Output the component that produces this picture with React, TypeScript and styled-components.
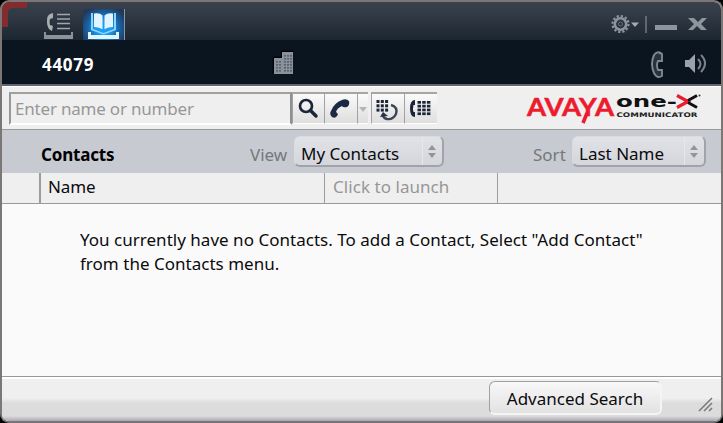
import React from 'react';
import styled, { createGlobalStyle } from 'styled-components';

const Global = createGlobalStyle`
  * { box-sizing: border-box; }
  body { margin: 0; background: #000; font-family: "Noto Sans", "Liberation Sans", sans-serif; }
  button, input { font-family: inherit; margin: 0; padding: 0; }
`;

const Window = styled.div`
  position: relative;
  display: flex;
  flex-direction: column;
  width: 723px;
  height: 423px;
  border: 2px solid #7b7777;
  border-bottom-color: #777379;
  border-radius: 9px;
  overflow: hidden;
  background: #fafafa;
  font-size: 17px;
  color: #0b0b0d;
`;

const Corner = styled.svg`
  position: absolute;
  left: 0;
  top: 0;
`;

const TitleBar = styled.header`
  display: flex;
  flex: none;
  height: 38px;
  padding-left: 40px;
  padding-right: 13px;
  background: linear-gradient(#3a414d, #303944 35%, #1c2732);
`;

const Tab = styled.button<{ $active?: boolean }>`
  display: block;
  width: ${p => (p.$active ? 42 : 41)}px;
  height: 31px;
  margin-top: 7px;
  border: 0;
  border-right: ${p => (p.$active ? '1px solid #8896a6' : '0')};
  border-radius: ${p => (p.$active ? '4px 0 0 0' : '0')};
  background: ${p => (p.$active ? 'radial-gradient(ellipse at 50% 60%, #1c9cf2 28%, #1763a6 55%, #22385a 85%)' : 'none')};
`;

const WindowControls = styled.div`
  display: flex;
  margin-left: auto;
`;

const StatusBar = styled.div`
  display: flex;
  flex: none;
  height: 46px;
  padding: 0 12px 0 40px;
  background: #0b1520;
  border-bottom: 2px solid #626575;
`;

const Extension = styled.strong`
  width: 228px;
  line-height: 49px;
  letter-spacing: 0.7px;
  color: #fff;
`;

const StatusIcons = styled.div`
  display: flex;
  margin-left: auto;
`;

const Toolbar = styled.div`
  display: flex;
  flex: none;
  height: 44px;
  padding: 5px 0 0 7px;
  background: #efefef;
  border-top: 1px solid #fff;
  border-bottom: 1px solid #9a9a9a;
`;

const SearchInput = styled.input`
  width: 283px;
  height: 33px;
  padding-left: 4px;
  border: 2px solid #989898;
  border-top-color: #a0a0a0;
  border-right-color: #8f8f8f;
  border-bottom-color: #fff;
  background: #efefef;
  font-size: 17px;
  letter-spacing: -0.2px;
  outline: none;
  &::placeholder { color: #979797; opacity: 1; }
`;

const ToolButton = styled.button<{ $w: number; $gap?: number }>`
  width: ${p => p.$w}px;
  height: 32px;
  margin-left: ${p => p.$gap || 0}px;
  border: 0;
  border-top: 2px solid #a5a5a5;
  border-left: 1px solid #a2a2a2;
  border-bottom: 1px solid #fff;
  background: linear-gradient(#fafafa, #dedede);
  svg { display: block; }
`;

const Brand = styled.svg`
  margin-left: auto;
  margin-right: 19px;
  margin-top: -3px;
`;

const FilterBar = styled.div`
  display: flex;
  flex: none;
  align-items: flex-start;
  height: 43px;
  padding: 6px 15px 0 39px;
  background: #c8cad2;
`;

const Heading = styled.h1`
  width: 209px;
  margin: 0;
  font-size: 17px;
  line-height: 37px;
  letter-spacing: -0.2px;
  color: #000;
`;

const Label = styled.label<{ $w: number; $end?: boolean }>`
  width: ${p => p.$w}px;
  margin-left: ${p => (p.$end ? 'auto' : '0')};
  line-height: 37px;
  color: #76777b;
`;

const Select = styled.button<{ $w: number }>`
  display: flex;
  width: ${p => p.$w}px;
  height: 31px;
  padding-left: 6px;
  border: 1px solid #d9dbe0;
  border-right: 2px solid #a2a3a8;
  border-bottom: 2px solid #a2a3a8;
  border-radius: 6px;
  background: linear-gradient(#e1e2e6, #d5d6dc);
  text-align: left;
  font-size: 17px;
  line-height: 33px;
  letter-spacing: 0;
  color: #0b0b0d;
  white-space: nowrap;
`;

const Chevrons = styled.svg`
  flex: none;
  margin-left: auto;
  border-left: 1px solid #e6e7eb;
`;

const ColumnHeader = styled.div`
  display: flex;
  flex: none;
  height: 31px;
  background: #efefef;
  border-bottom: 1px solid #999;
`;

const Column = styled.div<{ $w: number; $muted?: boolean; $thick?: boolean }>`
  width: ${p => p.$w}px;
  padding-left: ${p => (p.$muted ? 8 : 7)}px;
  border-right: ${p => (p.$thick ? 2 : 1)}px solid #9c9c9c;
  line-height: 27px;
  letter-spacing: ${p => (p.$muted ? 0.05 : -0.1)}px;
  color: ${p => (p.$muted ? '#979797' : '#0b0b0d')};
`;

const Content = styled.main`
  flex: 1;
  padding: 24px 0 0 78px;
  line-height: 24px;
  letter-spacing: 0.02px;
  white-space: nowrap;
`;

const Footer = styled.footer`
  display: flex;
  flex: none;
  height: 45px;
  padding-left: 487px;
  padding-top: 4px;
  border-top: 1px solid #999;
  background: linear-gradient(#fff 0 2px, #efefef 2px 21px, #dcdcdc 26px 39px, #a9a9af);
`;

const SearchButton = styled.button`
  width: 173px;
  height: 34px;
  padding-top: 2px;
  border: 2px solid #f4f4f4;
  border-top: 1px solid #a1a1a1;
  border-left: 1px solid #a1a1a1;
  border-radius: 6px;
  background: linear-gradient(#f8f8f8, #e2e2e2);
  font-size: 17px;
  line-height: 28px;
  color: #0b0b0d;
`;

const Grip = styled.svg`
  margin: 15px 0 0 36px;
`;

type DotsProps = { x: number; y: number; rows?: number; cols?: number; w?: number; h?: number; dx?: number; dy?: number };

function Dots({ x, y, rows = 3, cols = 3, w = 3, h = 3, dx = 4.3, dy = 4.3 }: DotsProps) {
  return (
    <>
      {Array.from({ length: rows * cols }, (_, i) => (
        <rect key={i} x={x + (i % cols) * dx} y={y + Math.floor(i / cols) * dy} width={w} height={h} />
      ))}
    </>
  );
}

function Picker({ width, value }: { width: number; value: string }) {
  return (
    <Select $w={width}>
      {value}
      <Chevrons width="20" height="28">
        <path d="M5 13l4-5 4 5zM5 16h8l-4 5z" fill="#949599" />
      </Chevrons>
    </Select>
  );
}

export default function App() {
  return (
    <>
      <Global />
      <Window>
        <TitleBar>
          <Tab aria-label="Call log">
            <svg width="41" height="31" viewBox="42 9 41 31">
              <path d="M53 13q-7 1-6 9 0 7 5 9l1-5-3-1q-1-3 0-6l3-1z" fill="#a9aeb3" />
              <path d="M57 14.500h13M57 19h13M57 23.500h13M57 28.500h13" stroke="#a1a6ac" strokeWidth="1.500" />
              <path d="M44 32h2v3h25v-3h2v7H44z" fill="#8b9299" />
            </svg>
          </Tab>
          <Tab $active aria-label="Contacts">
            <svg width="41" height="31" viewBox="83 9 41 31">
              <path d="M91 13h2v16l10.500 4 10.500-4V13h2v17l-12.500 4.500L91 30z" fill="#8fd6ff" />
              <path d="M94 13.500q6-1 8.500 2v14q-3-2.500-8.500-2.500zM104.500 15.500q3-3 8.500-2v13.500q-6 0-8.500 2.500z" fill="#e2f5ff" />
              <path d="M88 32h3v3h25v-3h3v7H88z" fill="#e2f5ff" />
            </svg>
          </Tab>
          <WindowControls>
            <svg width="98" height="38" viewBox="610 2 98 38">
              <circle cx="620.500" cy="24" r="8" fill="none" stroke="#8d949d" strokeWidth="2.200" strokeDasharray="2.300 1.890" />
              <circle cx="620.500" cy="24" r="5.700" fill="none" stroke="#8d949d" strokeWidth="2.600" />
              <circle cx="620.500" cy="24" r="2" fill="none" stroke="#69717b" strokeWidth="1" />
              <path d="M631 22.500h8l-4 4.500z" fill="#a5abb2" />
              <path d="M646 16v17" stroke="#7e868f" strokeWidth="1.300" />
              <path d="M655 25h22v5h-22z" fill="#8c949d" />
              <path d="M688 18h6l4 4 4-4h5l-6 6 6 6h-6l-4-4-4 4h-5l6-6z" fill="#8c949d" />
            </svg>
          </WindowControls>
        </TitleBar>
        <StatusBar>
          <Extension>44079</Extension>
          <svg width="25" height="44" viewBox="270 40 25 44">
            <path d="M273.500 73V57.500h8v-6h12" fill="none" stroke="#000" strokeWidth="1.500" />
            <path d="M274 58h8v-6h11v22h-19z" fill="#89919a" />
            <g fill="#59636f">
              <Dots x={276} y={61} rows={4} cols={2} w={2} h={1.6} dx={3} dy={3} />
              <Dots x={284} y={55} rows={6} cols={3} w={2} h={1.6} dx={3} dy={3} />
            </g>
          </svg>
          <StatusIcons>
            <svg width="62" height="44" viewBox="647 40 62 44">
              <path d="M661 53q-4-2-7 2-4 9 0 18 3 6 8 3v-6h-4q-2-5 0-9h4v-7q-1-1-3-1" fill="#28323d" stroke="#7f8790" strokeWidth="1.900" />
              <path d="M685 60h4l6-6v19l-6-6h-4z" fill="#9ca2aa" />
              <path d="M698 59q5 5 0 10M701 55q8 8 0 17" stroke="#7b848e" strokeWidth="2" fill="none" />
            </svg>
          </StatusIcons>
        </StatusBar>
        <Toolbar>
          <SearchInput placeholder="Enter name or number" />
          <ToolButton $w={32} aria-label="Search">
            <svg width="31" height="28" viewBox="293 93 31 28">
              <circle cx="306" cy="104" r="6" fill="none" stroke="#1b2739" strokeWidth="2.700" />
              <path d="M310.500 108.500l5.500 5.500" stroke="#1b2739" strokeWidth="3.500" strokeLinecap="round" />
            </svg>
          </ToolButton>
          <ToolButton $w={33} aria-label="Call">
            <svg width="31" height="28" viewBox="325 93 31 28">
              <path d="M332 115q-3-3-1-6 3-8 11-11 4-2 7 1 1 4-2 6-4 1-5-1-5 2-6 6 3 2 1 4-2 3-5 1z" fill="#1b2a42" />
            </svg>
          </ToolButton>
          <ToolButton $w={11} aria-label="Call options">
            <svg width="10" height="28"><path d="M1 12h8l-4 5z" fill="#b5b5b5" /></svg>
          </ToolButton>
          <ToolButton $w={33} $gap={3} aria-label="Redial">
            <svg width="31" height="28" viewBox="372 93 31 28">
              <g fill="#1b2537"><Dots x={376.5} y={98} /></g>
              <path d="M391 103q7 2 5 9-3 6-9 5-4-1-4-4" stroke="#3b4556" strokeWidth="2.400" fill="none" />
              <path d="M380 115l3-5 5 4z" fill="#273246" />
            </svg>
          </ToolButton>
          <ToolButton $w={33} aria-label="Dial pad">
            <svg width="31" height="28" viewBox="404 93 31 28">
              <path d="M414 98q-5 0-5 8.500t5 8.500v-5h-1.500q-1-3.500 0-7H414z" fill="#1b2537" />
              <g fill="#1b2537"><Dots x={416.5} y={99} rows={4} w={3.5} h={2.7} dx={4.7} dy={3.8} /></g>
            </svg>
          </ToolButton>
          <Brand width="176" height="36" viewBox="526 88 176 36">
            <text x="527" y="115" fontFamily="Lato" fontSize="24" fontWeight="700" textLength="87" lengthAdjust="spacingAndGlyphs" fill="#ec1c2e" stroke="#ec1c2e" strokeWidth="0.500">AVAYA</text>
            <path d="M587 112l-4 10" stroke="#ec1c2e" strokeWidth="3.600" />
            <text x="616" y="105.500" fontFamily="DejaVu Sans" fontSize="15" fontWeight="700" textLength="61" lengthAdjust="spacingAndGlyphs" fill="#111">one-</text>
            <path d="M677 94.500l11 6-11 6" stroke="#ec1c2e" strokeWidth="3.200" fill="none" />
            <path d="M697 94.500l-9 5M688 101.500l9 5" stroke="#111" strokeWidth="3" />
            <circle cx="699.500" cy="94.500" r="1" fill="#333" />
            <text x="616.500" y="116" fontFamily="DejaVu Sans" fontSize="6.300" fontWeight="700" textLength="81" lengthAdjust="spacingAndGlyphs" fill="#222">COMMUNICATOR</text>
          </Brand>
        </Toolbar>
        <FilterBar>
          <Heading>Contacts</Heading>
          <Label $w={44}>View</Label>
          <Picker width={150} value="My Contacts" />
          <Label $w={39} $end>Sort</Label>
          <Picker width={134} value="Last Name" />
        </FilterBar>
        <ColumnHeader>
          <Column $w={39} $thick />
          <Column $w={284}>Name</Column>
          <Column $w={173} $muted>Click to launch</Column>
        </ColumnHeader>
        <Content>
          You currently have no Contacts. To add a Contact, Select "Add Contact"<br />
          from the Contacts menu.
        </Content>
        <Footer>
          <SearchButton>Advanced Search</SearchButton>
          <Grip width="16" height="16"><path d="M1 15L14 2M6 15l8-8M11 15l3-3" stroke="#77777b" strokeWidth="1.500" /></Grip>
        </Footer>
        <Corner width="26" height="26"><path d="M0 25V0h25v6H11Q6 6 6 11v14z" fill="#832c30" /></Corner>
      </Window>
    </>
  );
}
